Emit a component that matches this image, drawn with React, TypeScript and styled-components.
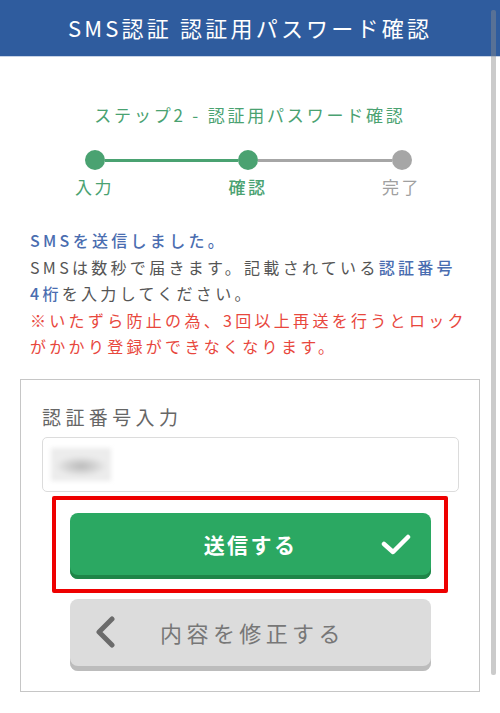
import styled, { createGlobalStyle } from 'styled-components';

const GlobalStyle = createGlobalStyle`
  html, body {
    margin: 0;
    padding: 0;
    background: #ffffff;
  }
  body {
    font-family: "Noto Sans CJK JP", "Noto Sans", sans-serif;
  }
`;

type StepState = 'done' | 'todo';

interface StepProps {
  label: string;
  state: StepState;
  strong?: boolean;
}

function Step({ label, state, strong }: StepProps) {
  return (
    <StepItem>
      <Dot $state={state} />
      <StepLabel $state={state} $strong={strong}>
        {label}
      </StepLabel>
    </StepItem>
  );
}

function App() {
  return (
    <Page>
      <GlobalStyle />
      <Header>SMS認証 認証用パスワード確認</Header>

      <StepTitle>ステップ2 - 認証用パスワード確認</StepTitle>
      <Steps>
        <Step label="入力" state="done" />
        <Connector $state="done" />
        <Step label="確認" state="done" strong />
        <Connector $state="todo" />
        <Step label="完了" state="todo" />
      </Steps>

      <Notice>
        <Blue>SMSを送信しました。</Blue>
        <br />
        SMSは数秒で届きます。記載されている<Blue>認証番号</Blue>
        <br />
        <Blue>4桁</Blue>を入力してください。
        <br />
        <Red>
          ※いたずら防止の為、3回以上再送を行うとロック
          <br />
          がかかり登録ができなくなります。
        </Red>
      </Notice>

      <Card>
        <FieldLabel>認証番号入力</FieldLabel>
        <Field>
          <Blurred />
        </Field>

        <Highlight>
          <PrimaryButton type="button">
            <span />
            <ButtonText>送信する</ButtonText>
            <svg width="30" height="24" viewBox="0 0 30 24">
              <polyline
                points="3,12 12,20 27,5"
                fill="none"
                stroke="#ffffff"
                strokeWidth="4.5"
                strokeLinecap="round"
                strokeLinejoin="round"
              />
            </svg>
          </PrimaryButton>
        </Highlight>

        <SecondaryButton type="button">
          <svg width="30" height="32" viewBox="0 0 30 32">
            <polyline
              points="18,3 5,16 18,29"
              fill="none"
              stroke="#6b6b6b"
              strokeWidth="5"
              strokeLinecap="round"
              strokeLinejoin="round"
            />
          </svg>
          <SecondaryText>内容を修正する</SecondaryText>
          <span />
        </SecondaryButton>
      </Card>

      <ScrollThumb />
    </Page>
  );
}

export default App;

const Page = styled.div`
  position: relative;
  width: 500px;
  min-height: 713px;
  display: flex;
  flex-direction: column;
  align-items: center;
`;

const Header = styled.header`
  align-self: stretch;
  height: 57px;
  background: #2f5c9e;
  border-bottom: 1px solid #c7d3e6;
  box-sizing: border-box;
  color: #ffffff;
  font-size: 22px;
  font-weight: 400;
  letter-spacing: 3.2px;
  display: flex;
  align-items: center;
  justify-content: center;
  padding-bottom: 2px;
`;

const StepTitle = styled.div`
  margin-top: 46px;
  color: #4aa271;
  font-size: 17px;
  line-height: 24px;
  letter-spacing: 2.8px;
  font-weight: 400;
`;

const Steps = styled.div`
  display: flex;
  align-items: flex-start;
  width: 347px;
  margin-top: 23px;
  margin-right: 4px;
`;

const StepItem = styled.div`
  width: 40px;
  display: flex;
  flex-direction: column;
  align-items: center;
  gap: 5px;
`;

const Dot = styled.div<{ $state: StepState }>`
  width: 20px;
  height: 20px;
  border-radius: 50%;
  background: ${(p) => (p.$state === 'done' ? '#4aa271' : '#a6a6a6')};
`;

const Connector = styled.div<{ $state: StepState }>`
  flex: 1;
  height: 3px;
  margin: 9px -10px 0;
  background: ${(p) => (p.$state === 'done' ? '#4aa271' : '#a6a6a6')};
`;

const StepLabel = styled.div<{ $state: StepState; $strong?: boolean }>`
  font-size: 17px;
  line-height: 24px;
  letter-spacing: 2.4px;
  white-space: nowrap;
  font-weight: ${(p) => (p.$strong ? 500 : 400)};
  color: ${(p) => (p.$state === 'done' ? '#4aa271' : '#a0a0a0')};
`;

const Notice = styled.p`
  align-self: stretch;
  margin: 28px 0 0;
  padding: 0 10px 0 30px;
  font-size: 16px;
  line-height: 26.5px;
  letter-spacing: 3.3px;
  color: #555555;
  white-space: nowrap;
`;

const Blue = styled.span`
  color: #4a6db0;
  font-weight: 500;
`;

const Red = styled.span`
  color: #e8473d;
`;

const Card = styled.section`
  box-sizing: border-box;
  width: 460px;
  margin: 19px 0 20px;
  margin-right: 20px;
  align-self: flex-end;
  border: 1px solid #c6c6c6;
  padding: 24px 20px 20px 21px;
  display: flex;
  flex-direction: column;
`;

const FieldLabel = styled.div`
  font-size: 19px;
  line-height: 26px;
  letter-spacing: 4.4px;
  color: #666666;
`;

const Field = styled.div`
  box-sizing: border-box;
  height: 55px;
  margin-top: 7px;
  border: 1px solid #dcdcdc;
  border-radius: 5px;
  display: flex;
  align-items: center;
  padding-left: 8px;
`;

const Blurred = styled.div`
  width: 60px;
  height: 33px;
  background: radial-gradient(ellipse 26px 10px at 50% 55%, #b9b9b9 0%, #d6d6d6 60%, #ececec 100%);
  filter: blur(2px);
`;

const Highlight = styled.div`
  margin: 4px 11px 0 10px;
  border: 4px solid #ee0000;
  border-radius: 2px;
  padding: 13px 13px 10px 14px;
`;

const ButtonBase = styled.button`
  box-sizing: border-box;
  width: 100%;
  border: none;
  border-radius: 8px;
  display: grid;
  grid-template-columns: 30px 1fr 30px;
  align-items: center;
  justify-items: center;
  font-family: "Noto Sans CJK JP", "Noto Sans", sans-serif;
  cursor: pointer;
`;

const PrimaryButton = styled(ButtonBase)`
  height: 66px;
  padding: 0 20px 4px;
  background: #2ba862;
  box-shadow: inset 0 -4px 0 #1f8548;
`;

const ButtonText = styled.span`
  color: #ffffff;
  font-size: 21px;
  font-weight: 700;
  letter-spacing: 2.4px;
`;

const SecondaryButton = styled(ButtonBase)`
  height: 72px;
  width: auto;
  margin: 6px 28px 0;
  padding: 0 20px 5px 24px;
  background: #dcdcdc;
  box-shadow: inset 0 -5px 0 #bcbcbc;
`;

const SecondaryText = styled.span`
  color: #777777;
  font-size: 22px;
  letter-spacing: 4.4px;
`;

const ScrollThumb = styled.div`
  position: absolute;
  top: 10px;
  right: 4px;
  width: 5px;
  height: 665px;
  border-radius: 2px;
  background: rgba(140, 140, 140, 0.45);
`;
